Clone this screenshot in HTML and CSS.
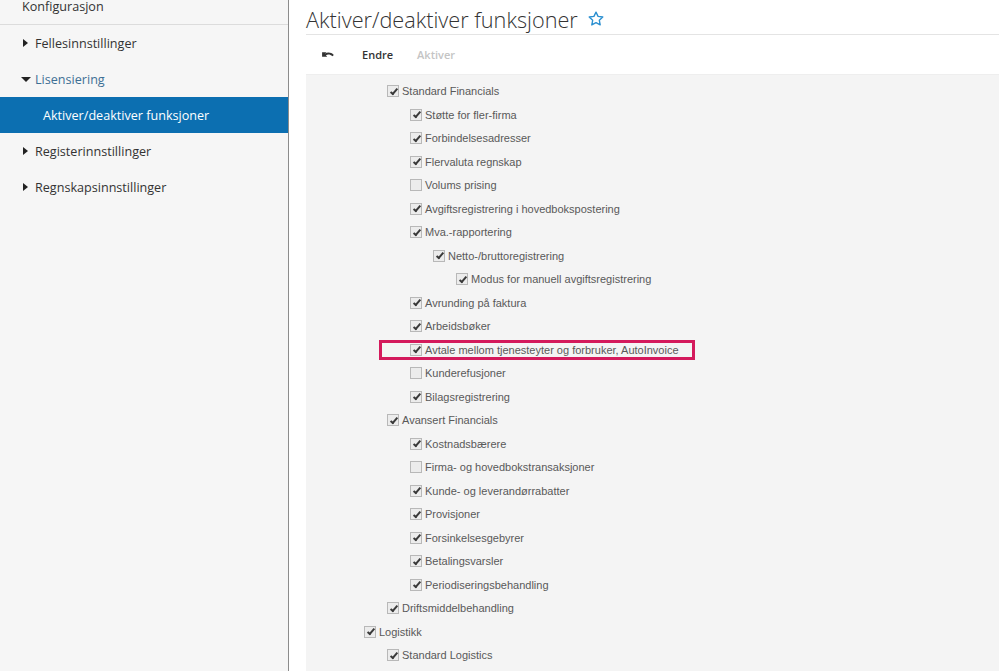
FILE: index.html
```html
<!DOCTYPE html>
<html lang="no">
<head>
<meta charset="utf-8">
<title>Aktiver/deaktiver funksjoner</title>
<link rel="stylesheet" href="styles.css">
</head>
<body>
<div class="app">
  <nav class="sidebar">
    <div class="side-head">Konfigurasjon</div>
    <ul class="side-list">
      <li class="side-item"><span class="tri tri-right"></span>Fellesinnstillinger</li>
      <li class="side-item open"><span class="tri tri-down"></span>Lisensiering</li>
      <li class="side-item sub active">Aktiver/deaktiver funksjoner</li>
      <li class="side-item"><span class="tri tri-right"></span>Registerinnstillinger</li>
      <li class="side-item"><span class="tri tri-right"></span>Regnskapsinnstillinger</li>
    </ul>
  </nav>
  <main class="main">
    <header class="page-head">
      <h1 class="title">Aktiver/deaktiver funksjoner</h1>
      <svg class="star" viewBox="0 0 24 24" width="18" height="18"><path d="M12 2.8l2.75 5.72 6.3.8-4.62 4.36 1.17 6.24L12 16.9l-5.6 3.02 1.17-6.24L2.95 9.32l6.3-.8z" fill="none" stroke="#2a8fd0" stroke-width="1.8" stroke-linejoin="round"/></svg>
    </header>
    <div class="toolbar">
      <svg class="undo" viewBox="0 0 16 12" width="15" height="11"><path d="M1 8.5 L1 3.5 L5.8 3.5 L4.1 5.3 C6.8 3.2 10.8 3.4 13.8 6.6 L12.3 8 C10 5.8 7.1 5.6 5.2 6.9 L6.6 8.5 Z" fill="#333"/></svg>
      <span class="tool">Endre</span>
      <span class="tool disabled">Aktiver</span>
    </div>
    <section class="panel">
      <ul class="tree">
        <li class="node l1"><span class="cb on"></span>Standard Financials</li>
        <li class="node l2"><span class="cb on"></span>Støtte for fler-firma</li>
        <li class="node l2"><span class="cb on"></span>Forbindelsesadresser</li>
        <li class="node l2"><span class="cb on"></span>Flervaluta regnskap</li>
        <li class="node l2"><span class="cb"></span>Volums prising</li>
        <li class="node l2"><span class="cb on"></span>Avgiftsregistrering i hovedbokspostering</li>
        <li class="node l2"><span class="cb on"></span>Mva.-rapportering</li>
        <li class="node l3"><span class="cb on"></span>Netto-/bruttoregistrering</li>
        <li class="node l4"><span class="cb on"></span>Modus for manuell avgiftsregistrering</li>
        <li class="node l2"><span class="cb on"></span>Avrunding på faktura</li>
        <li class="node l2"><span class="cb on"></span>Arbeidsbøker</li>
        <li class="node l2 marked"><span class="cb on"></span>Avtale mellom tjenesteyter og forbruker, AutoInvoice</li>
        <li class="node l2"><span class="cb"></span>Kunderefusjoner</li>
        <li class="node l2"><span class="cb on"></span>Bilagsregistrering</li>
        <li class="node l1"><span class="cb on"></span>Avansert Financials</li>
        <li class="node l2"><span class="cb on"></span>Kostnadsbærere</li>
        <li class="node l2"><span class="cb"></span>Firma- og hovedbokstransaksjoner</li>
        <li class="node l2"><span class="cb on"></span>Kunde- og leverandørrabatter</li>
        <li class="node l2"><span class="cb on"></span>Provisjoner</li>
        <li class="node l2"><span class="cb on"></span>Forsinkelsesgebyrer</li>
        <li class="node l2"><span class="cb on"></span>Betalingsvarsler</li>
        <li class="node l2"><span class="cb on"></span>Periodiseringsbehandling</li>
        <li class="node l1"><span class="cb on"></span>Driftsmiddelbehandling</li>
        <li class="node l0"><span class="cb on"></span>Logistikk</li>
        <li class="node l1"><span class="cb on"></span>Standard Logistics</li>
      </ul>
    </section>
  </main>
</div>
</body>
</html>
```

FILE: styles.css
```css
*, *::before, *::after { box-sizing: border-box; }
html, body { margin: 0; padding: 0; height: 100%; }
body {
  font-family: "Open Sans", "Liberation Sans", sans-serif;
  color: #333;
  background: #fff;
  overflow: hidden;
}
ul { list-style: none; margin: 0; padding: 0; }

.app {
  display: flex;
  height: 671px;
}

/* left navigation */
.sidebar {
  width: 289px;
  flex: none;
  background: #f6f6f6;
  border-right: 1px solid #8c8c8c;
}
.side-head {
  height: 25px;
  padding-left: 22px;
  font-size: 12.6px;
  line-height: 13px;
  border-bottom: 1px solid #dcdcdc;
  color: #333;
}
.side-item {
  height: 36px;
  display: flex;
  align-items: center;
  padding-left: 22px;
  font-size: 12.6px;
  color: #333;
}
.side-item.open { color: #3d6f94; }
.side-item.sub { padding-left: 43px; }
.side-item.active {
  background: #0c6fb1;
  color: #fff;
}
.tri {
  width: 0; height: 0;
  display: inline-block;
}
.tri-right {
  border-top: 4.5px solid transparent;
  border-bottom: 4.5px solid transparent;
  border-left: 5px solid #222;
  margin-left: 1px;
  margin-right: 7px;
}
.tri-down {
  border-left: 5px solid transparent;
  border-right: 5px solid transparent;
  border-top: 5px solid #222;
  margin-left: -1px;
  margin-right: 4px;
}

/* main area */
.main {
  flex: 1;
  padding-left: 17px;
  display: flex;
  flex-direction: column;
  min-width: 0;
}
.page-head {
  height: 35px;
  display: flex;
  align-items: center;
  gap: 9px;
  border-bottom: 1px solid #e4e4e4;
}
.title {
  margin: 0;
  font-size: 21.7px;
  font-weight: 300;
  color: #333;
  line-height: 1;
  padding-top: 5px;
}
.star { margin-top: 3px; }
.toolbar {
  height: 40px;
  display: flex;
  align-items: center;
  padding-left: 15px;
  border-bottom: 1px solid #eeeeee;
}
.undo { margin-right: 26px; }
.tool {
  font-size: 11px;
  font-weight: 600;
  color: #333;
  margin-right: 24px;
}
.tool.disabled { color: #c4c4c4; }

.panel {
  flex: 1;
  background: #f4f4f4;
  padding-top: 4.5px;
}
.tree {
  font-family: "Liberation Sans", Arial, sans-serif;
  font-size: 11px;
  color: #595959;
}
.node {
  height: 23.5px;
  display: flex;
  align-items: center;
  white-space: nowrap;
}
.l0 { padding-left: 58px; }
.l1 { padding-left: 81px; }
.l2 { padding-left: 104px; }
.l3 { padding-left: 127px; }
.l4 { padding-left: 150px; }
.marked { position: relative; }
/* highlight frame round one feature row */
.marked::after {
  content: "";
  position: absolute;
  left: 73px;
  top: 2px;
  width: 316px;
  height: 20px;
  border: 3px solid #d41a5c;
}
.cb {
  width: 12px;
  height: 12px;
  border: 1px solid #b8b8b8;
  background: #ececec;
  margin-right: 3px;
  position: relative;
  flex: none;
}
.cb.on::after {
  content: "";
  position: absolute;
  left: 3.5px;
  top: 0.5px;
  width: 4px;
  height: 8px;
  border-right: 2px solid #3a3a3a;
  border-bottom: 2px solid #3a3a3a;
  transform: rotate(40deg);
}
```
